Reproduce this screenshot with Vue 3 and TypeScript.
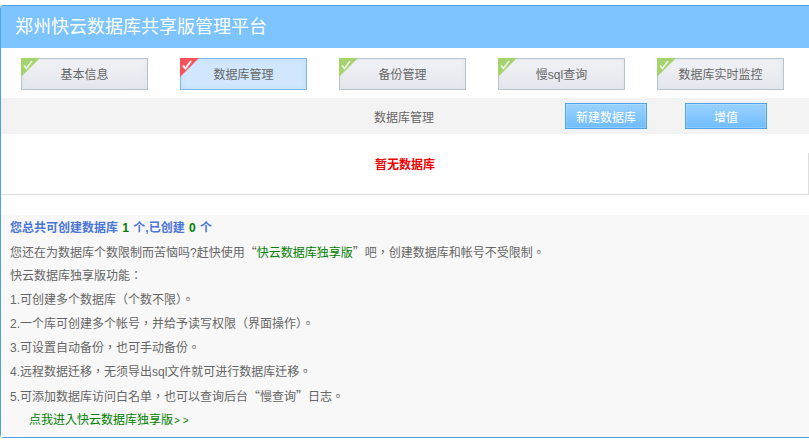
<template>
  <div class="page">
    <div class="panel">
      <header class="title">郑州快云数据库共享版管理平台</header>

      <nav class="tabs">
        <a v-for="tab in tabs" :key="tab" class="tab" :class="{ active: tab === current }">
          <svg class="corner" width="19" height="19" viewBox="0 0 19 19">
            <polygon points="0,0 19,0 0,19" :fill="tab === current ? '#f9525a' : '#a5d36f'" />
            <path
              d="M3 7.5 L5.5 10.5 L11 3"
              fill="none"
              stroke="#fff"
              :stroke-width="tab === current ? 2 : 1.6"
              :opacity="tab === current ? 1 : 0.8"
            />
          </svg>
          {{ tab }}
        </a>
      </nav>

      <div class="toolbar">
        <span class="toolbar-title">数据库管理</span>
        <button class="btn btn-new">新建数据库</button>
        <button class="btn btn-add">增值</button>
      </div>

      <div class="empty">暂无数据库</div>

      <section class="info">
        <p class="summary">您总共可创建数据库 <b>1</b> 个,已创建 <b>0</b> 个</p>
        <p>您还在为数据库个数限制而苦恼吗?赶快使用<span class="quote">“</span><span class="green">快云数据库独享版</span><span class="quote">”</span>吧，创建数据库和帐号不受限制。</p>
        <p>快云数据库独享版功能：</p>
        <p v-for="line in features" :key="line">{{ line }}</p>
        <p>5.可添加数据库访问白名单，也可以查询后台<span class="quote">“</span>慢查询<span class="quote">”</span>日志。</p>
        <p class="enter">点我进入快云数据库独享版<span class="arrows">&gt;&gt;</span></p>
      </section>
    </div>
  </div>
</template>

<script setup lang="ts">
const tabs: string[] = ['基本信息', '数据库管理', '备份管理', '慢sql查询', '数据库实时监控']
const current = '数据库管理'

const features: string[] = [
  '1.可创建多个数据库（个数不限）。',
  '2.一个库可创建多个帐号，并给予读写权限（界面操作）。',
  '3.可设置自动备份，也可手动备份。',
  '4.远程数据迁移，无须导出sql文件就可进行数据库迁移。'
]
</script>

<style>
html,
body {
  background: #fff;
  overflow: hidden;
}
</style>

<style scoped>
.page {
  box-sizing: border-box;
  height: 447px;
  padding-top: 5px;
}

.panel {
  box-sizing: border-box;
  width: 809px;
  height: 433px;
  border: 1px solid #4ea1e4;
  border-right: none;
  border-radius: 4px 0 0 4px;
  font-family: "Liberation Sans", "Noto Sans CJK TC", sans-serif;
  font-size: 12px;
  color: #666;
}

.title {
  height: 42px;
  padding-left: 14px;
  background: #7dc3fd;
  color: #fff;
  font-size: 18px;
  line-height: 42px;
}

.tabs {
  display: flex;
  gap: 32px;
  padding: 10px 0 8px 20px;
}

.tab {
  position: relative;
  box-sizing: border-box;
  width: 127px;
  height: 32px;
  border: 1px solid #b8c4d2;
  background: linear-gradient(#f1f2f6, #e4e7ed);
  box-shadow: inset 0 0 5px #e0e3ea;
  text-align: center;
  line-height: 32px;
}

.tab.active {
  border-color: #7fb9ee;
  background: #d0e7fd;
  box-shadow: inset 0 0 5px #bfdcf8;
}

.corner {
  position: absolute;
  left: -1px;
  top: -1px;
}

.toolbar {
  display: flex;
  align-items: center;
  height: 36px;
  background: #f3f3f3;
}

.toolbar-title {
  margin-left: 373px;
  width: 191px;
}

.btn {
  box-sizing: border-box;
  width: 82px;
  height: 26px;
  padding: 0;
  border: 1px solid #4ea5e8;
  background: linear-gradient(#9ad2fe, #6fbcfd);
  box-shadow: inset 0 0 0 1px rgba(255, 255, 255, 0.2);
  color: #fff;
  font: inherit;
}

.btn-add {
  margin-left: 38px;
}

.empty {
  position: relative;
  box-sizing: border-box;
  height: 61px;
  border-bottom: 1px solid #ddd;
  color: #ee0000;
  font-weight: bold;
  text-align: center;
  line-height: 62px;
}

.empty::after {
  content: "";
  position: absolute;
  top: 19px;
  right: 0;
  bottom: 0;
  width: 1px;
  background: #ddd;
}

.info {
  height: 221px;
  margin-top: 20px;
  padding-top: 1px;
  background: #f8f8f8;
}

.info p {
  margin: 0;
  padding-left: 9px;
  height: 24px;
  line-height: 24px;
}

.info .summary {
  color: #4a76d8;
  font-weight: bold;
  word-spacing: 1px;
}

.summary b {
  color: #008000;
}

.quote {
  font-family: "Noto Sans CJK SC", sans-serif;
}

.green {
  color: #008000;
}

.info .enter {
  padding-left: 28px;
  color: #008000;
}

.arrows {
  font-size: 10px;
  letter-spacing: 3px;
  margin-left: 1px;
}
</style>
